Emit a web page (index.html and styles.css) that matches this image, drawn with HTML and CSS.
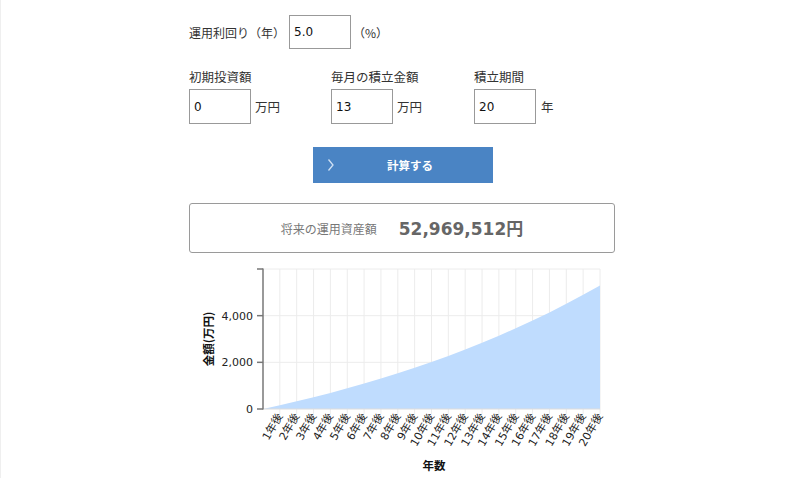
FILE: index.html
```html
<!DOCTYPE html>
<html lang="ja">
<head>
<meta charset="utf-8">
<title>積立シミュレーション</title>
<link rel="stylesheet" href="styles.css">
</head>
<body>
<div class="page">
  <div class="container">
    <div class="row-rate">
      <label class="rate-label">運用利回り（年）</label>
      <input class="field" type="text" value="5.0">
      <span class="unit unit-rate">（%）</span>
    </div>
    <div class="row-inputs">
      <div class="col">
        <div class="col-label">初期投資額</div>
        <div class="col-field"><input class="field" type="text" value="0"><span class="unit">万円</span></div>
      </div>
      <div class="col">
        <div class="col-label">毎月の積立金額</div>
        <div class="col-field"><input class="field" type="text" value="13"><span class="unit">万円</span></div>
      </div>
      <div class="col">
        <div class="col-label">積立期間</div>
        <div class="col-field"><input class="field" type="text" value="20"><span class="unit unit-year">年</span></div>
      </div>
    </div>
    <div class="btn-row">
      <button class="calc-btn" type="button">
        <svg class="chev" width="8" height="14" viewBox="0 0 8 14"><polyline points="1.5,1.5 6,7 1.5,12.5" fill="none" stroke="#cfe0f4" stroke-width="1.3"/></svg>
        <span class="btn-text">計算する</span>
      </button>
    </div>
    <div class="result">
      <span class="result-label">将来の運用資産額</span>
      <span class="result-value">52,969,512円</span>
    </div>
    <svg class="chart" width="426" height="216" viewBox="0 0 426 216">
      <g stroke="#ececec" stroke-width="1">
        <line x1="74" y1="7" x2="411" y2="7"/>
        <line x1="74" y1="53.67" x2="411" y2="53.67"/>
        <line x1="74" y1="100.33" x2="411" y2="100.33"/>
        <line x1="90.85" y1="7" x2="90.85" y2="152"/>
        <line x1="107.7" y1="7" x2="107.7" y2="152"/>
        <line x1="124.55" y1="7" x2="124.55" y2="152"/>
        <line x1="141.4" y1="7" x2="141.4" y2="152"/>
        <line x1="158.25" y1="7" x2="158.25" y2="152"/>
        <line x1="175.1" y1="7" x2="175.1" y2="152"/>
        <line x1="191.95" y1="7" x2="191.95" y2="152"/>
        <line x1="208.8" y1="7" x2="208.8" y2="152"/>
        <line x1="225.65" y1="7" x2="225.65" y2="152"/>
        <line x1="242.5" y1="7" x2="242.5" y2="152"/>
        <line x1="259.35" y1="7" x2="259.35" y2="152"/>
        <line x1="276.2" y1="7" x2="276.2" y2="152"/>
        <line x1="293.05" y1="7" x2="293.05" y2="152"/>
        <line x1="309.9" y1="7" x2="309.9" y2="152"/>
        <line x1="326.75" y1="7" x2="326.75" y2="152"/>
        <line x1="343.6" y1="7" x2="343.6" y2="152"/>
        <line x1="360.45" y1="7" x2="360.45" y2="152"/>
        <line x1="377.3" y1="7" x2="377.3" y2="152"/>
        <line x1="394.15" y1="7" x2="394.15" y2="152"/>
        <line x1="411" y1="7" x2="411" y2="152"/>
      </g>
      <polygon fill="#bfdcfe" points="74,147 90.85,143.26 107.7,139.34 124.55,135.22 141.4,130.89 158.25,126.35 175.1,121.58 191.95,116.57 208.8,111.31 225.65,105.79 242.5,99.99 259.35,93.9 276.2,87.51 293.05,80.79 309.9,73.74 326.75,66.34 343.6,58.57 360.45,50.42 377.3,41.85 394.15,32.85 411,23.41 411,147"/>
      <line x1="74" y1="147" x2="411" y2="147" stroke="#dcdcdc" stroke-width="1"/>
      <g stroke="#777" stroke-width="1.5">
        <line x1="74" y1="6.5" x2="74" y2="147.5"/>
        <line x1="68" y1="7" x2="74" y2="7"/>
        <line x1="68" y1="53.67" x2="74" y2="53.67"/>
        <line x1="68" y1="100.33" x2="74" y2="100.33"/>
        <line x1="68" y1="147" x2="74" y2="147"/>
      </g>
      <g class="ytick" text-anchor="end">
        <text x="64" y="57.5">4,000</text>
        <text x="64" y="104">2,000</text>
        <text x="64" y="151">0</text>
      </g>
      <g class="xtick" text-anchor="end">
        <text transform="translate(94,154) rotate(-60)">1年後</text>
        <text transform="translate(110.8,154) rotate(-60)">2年後</text>
        <text transform="translate(127.7,154) rotate(-60)">3年後</text>
        <text transform="translate(144.5,154) rotate(-60)">4年後</text>
        <text transform="translate(161.4,154) rotate(-60)">5年後</text>
        <text transform="translate(178.2,154) rotate(-60)">6年後</text>
        <text transform="translate(195.1,154) rotate(-60)">7年後</text>
        <text transform="translate(211.9,154) rotate(-60)">8年後</text>
        <text transform="translate(228.8,154) rotate(-60)">9年後</text>
        <text transform="translate(245.6,154) rotate(-60)">10年後</text>
        <text transform="translate(262.5,154) rotate(-60)">11年後</text>
        <text transform="translate(279.3,154) rotate(-60)">12年後</text>
        <text transform="translate(296.2,154) rotate(-60)">13年後</text>
        <text transform="translate(313,154) rotate(-60)">14年後</text>
        <text transform="translate(329.9,154) rotate(-60)">15年後</text>
        <text transform="translate(346.7,154) rotate(-60)">16年後</text>
        <text transform="translate(363.6,154) rotate(-60)">17年後</text>
        <text transform="translate(380.4,154) rotate(-60)">18年後</text>
        <text transform="translate(397.3,154) rotate(-60)">19年後</text>
        <text transform="translate(414.1,154) rotate(-60)">20年後</text>
      </g>
      <text class="axis-title" text-anchor="middle" transform="translate(24,77) rotate(-90)">金額(万円)</text>
      <text class="axis-title" text-anchor="middle" x="245" y="208">年数</text>
    </svg>
  </div>
</div>
</body>
</html>
```

FILE: styles.css
```css
* { box-sizing: border-box; }
html, body {
  margin: 0;
  padding: 0;
  background: #fff;
}
body {
  font-family: "DejaVu Sans", "Noto Sans CJK JP", sans-serif;
  color: #333;
}
.page {
  border-left: 1px solid #efefef;
  min-height: 100vh;
}
.container {
  width: 426px;
  margin-left: 188px;
}
.row-rate {
  display: flex;
  align-items: center;
  padding-top: 15px;
}
.rate-label {
  width: 100px;
  font-size: 12px;
  font-family: "Noto Sans CJK JP", sans-serif;
  color: #333;
}
.field {
  width: 62px;
  height: 34px;
  border: 1px solid #999;
  border-radius: 0;
  padding: 0 0 0 4px;
  font-family: "DejaVu Sans", sans-serif;
  font-size: 12px;
  color: #111;
  background: #fff;
  outline: none;
  margin: 0;
}
.unit {
  font-family: "Noto Sans CJK JP", sans-serif;
  font-size: 12.5px;
  color: #333;
  margin-left: 4px;
}
.unit-rate {
  margin-left: 2px;
  font-size: 12px;
}
.unit-year { margin-left: 5px; }
.row-inputs {
  display: grid;
  grid-template-columns: 142px 143px 1fr;
  margin-top: 19px;
}
.col-label {
  font-family: "Noto Sans CJK JP", sans-serif;
  font-size: 12.5px;
  color: #333;
  line-height: 18px;
  height: 20px;
}
.col-field {
  display: flex;
  align-items: center;
  margin-top: 1px;
}
.col-field .field { height: 35px; }
.btn-row {
  display: flex;
  justify-content: center;
  margin-top: 23px;
  padding-left: 2px;
}
.calc-btn {
  width: 180px;
  height: 36px;
  background: #4a84c4;
  border: none;
  border-radius: 0;
  display: flex;
  align-items: center;
  padding: 0 0 0 14px;
  margin: 0;
  cursor: pointer;
}
.chev { display: block; flex: none; }
.btn-text {
  flex: 1;
  text-align: center;
  padding-right: 8px;
  font-family: "Noto Sans CJK JP", sans-serif;
  font-weight: bold;
  font-size: 11.5px;
  color: #fff;
}
.result {
  margin-top: 20px;
  height: 50px;
  border: 1px solid #9a9a9a;
  border-radius: 3px;
  display: flex;
  align-items: center;
  justify-content: center;
  gap: 22px;
}
.result-label {
  font-family: "Noto Sans CJK JP", sans-serif;
  font-size: 12px;
  color: #777;
}
.result-value {
  font-family: "DejaVu Sans", "Noto Sans CJK JP", sans-serif;
  font-weight: bold;
  font-size: 17px;
  color: #666;
  margin-top: -2px;
}
.chart {
  display: block;
  margin-top: 9px;
}
.ytick text {
  font-family: "DejaVu Sans", sans-serif;
  font-size: 11px;
  fill: #222;
}
.xtick text {
  font-family: "DejaVu Sans", "Noto Sans CJK JP", sans-serif;
  font-size: 11px;
  fill: #222;
}
.axis-title {
  font-family: "Noto Sans CJK JP", sans-serif;
  font-weight: bold;
  font-size: 11.5px;
  fill: #111;
}
```
